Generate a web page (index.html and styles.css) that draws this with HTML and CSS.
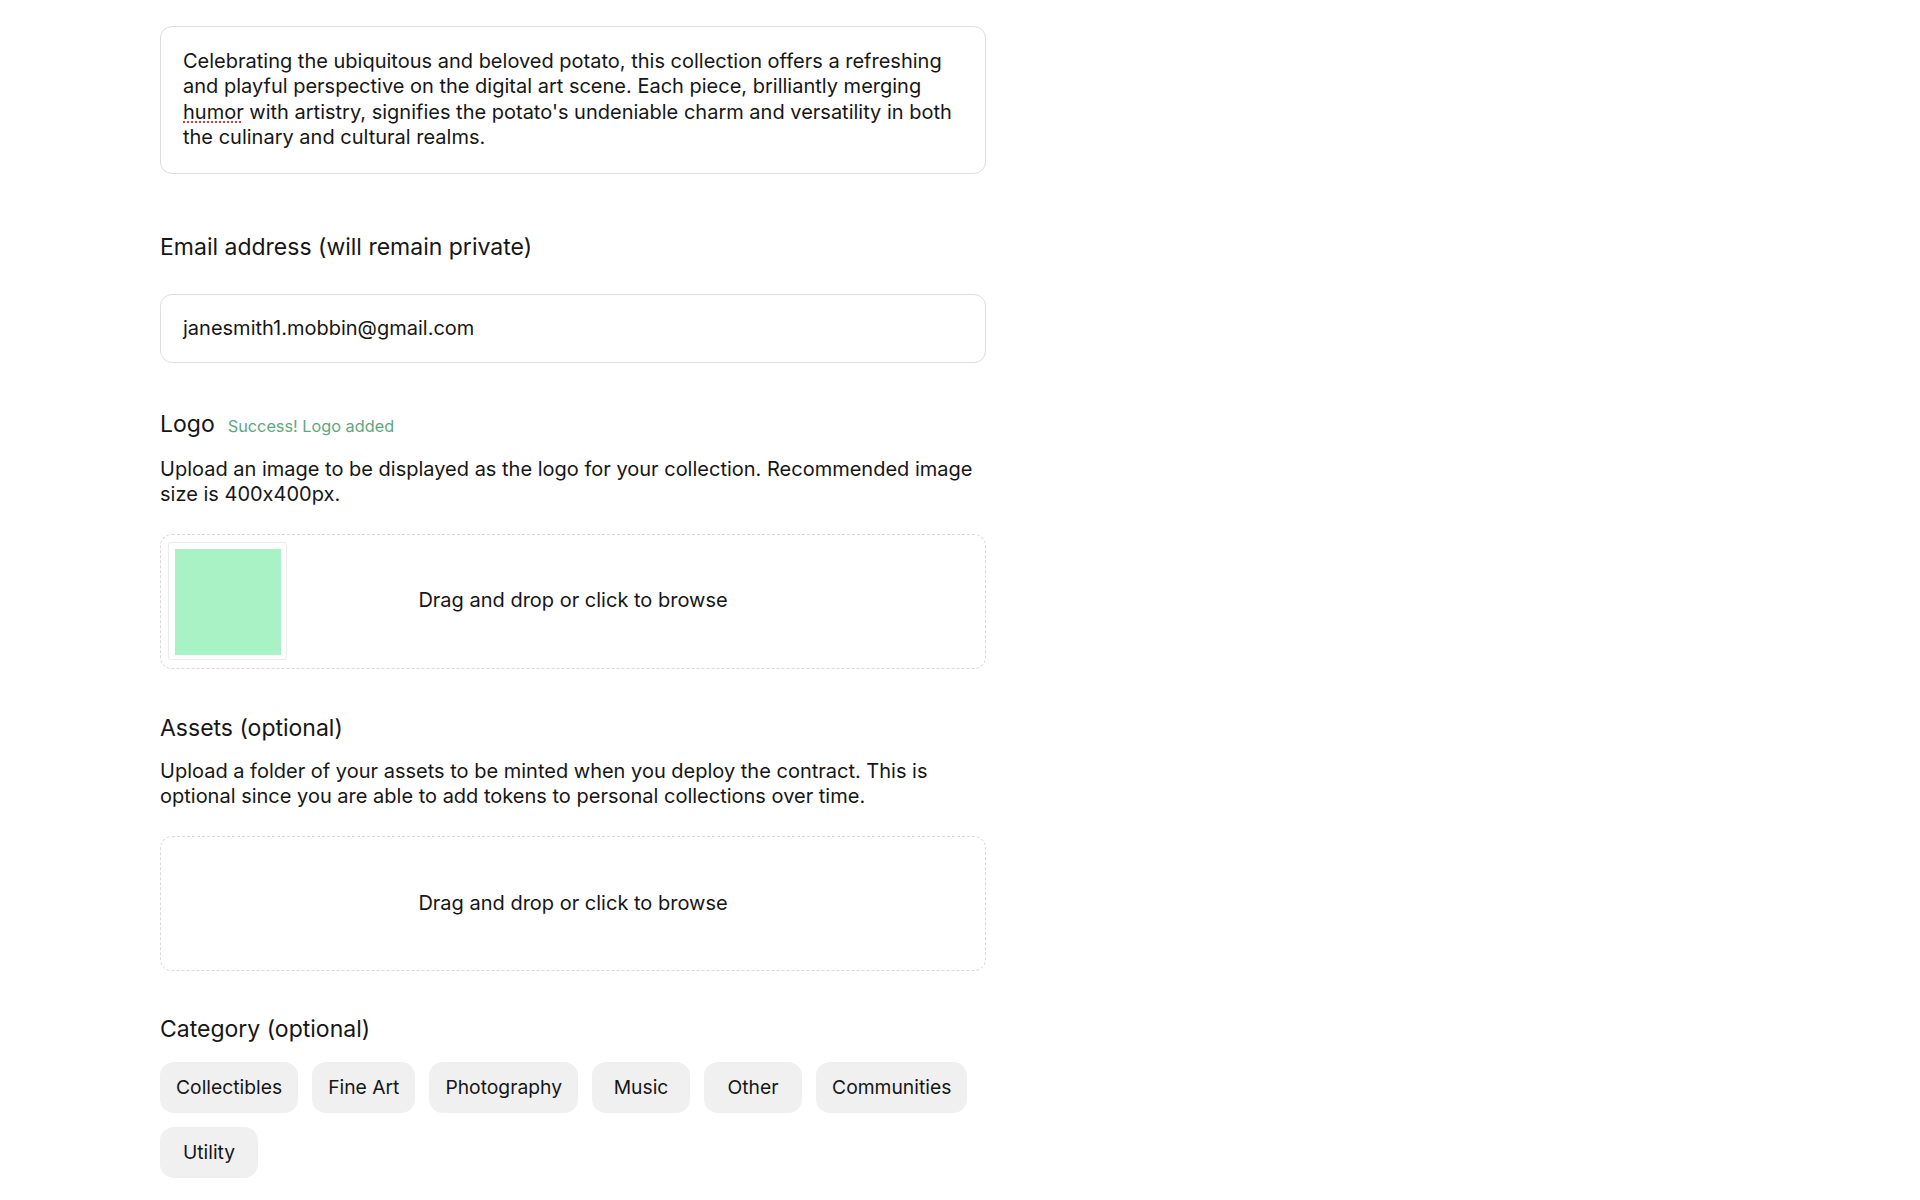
FILE: index.html
```html
<!DOCTYPE html>
<html lang="en">
<head>
<meta charset="utf-8">
<title>Create collection</title>
<link rel="stylesheet" href="styles.css">
</head>
<body>
<main class="form">
  <div class="textarea">Celebrating the ubiquitous and beloved potato, this collection offers a refreshing and playful perspective on the digital art scene. Each piece, brilliantly merging <span class="spell">humor</span> with artistry, signifies the potato's undeniable charm and versatility in both the culinary and cultural realms.</div>

  <section class="field field-email">
    <div class="label">Email address (will remain private)</div>
    <div class="input">janesmith1.mobbin@gmail.com</div>
  </section>

  <section class="field field-logo">
    <div class="label">Logo <span class="success">Success! Logo added</span></div>
    <p class="help">Upload an image to be displayed as the logo for your collection. Recommended image size is 400x400px.</p>
    <div class="dropzone">
      <div class="thumb"><div class="thumb-img"></div></div>
      <span class="drop-text">Drag and drop or click to browse</span>
    </div>
  </section>

  <section class="field field-assets">
    <div class="label">Assets (optional)</div>
    <p class="help">Upload a folder of your assets to be minted when you deploy the contract. This is optional since you are able to add tokens to personal collections over time.</p>
    <div class="dropzone">
      <span class="drop-text">Drag and drop or click to browse</span>
    </div>
  </section>

  <section class="field field-category">
    <div class="label">Category (optional)</div>
    <div class="chips">
      <span class="chip">Collectibles</span>
      <span class="chip">Fine Art</span>
      <span class="chip">Photography</span>
      <span class="chip">Music</span>
      <span class="chip">Other</span>
      <span class="chip">Communities</span>
      <span class="chip">Utility</span>
    </div>
  </section>
</main>
</body>
</html>
```

FILE: styles.css
```css
* { box-sizing: border-box; }
html, body {
  margin: 0;
  padding: 0;
  background: #ffffff;
}
body {
  font-family: Inter, "Noto Sans", "Liberation Sans", sans-serif;
  font-feature-settings: "calt" 0;
  color: #161616;
  font-size: 20px;
  line-height: 1.265;
}
.form {
  width: 826px;
  margin-left: 160px;
  padding-top: 26px;
  display: flex;
  flex-direction: column;
}
.textarea {
  border: 1px solid #dedede;
  border-radius: 12px;
  padding: 22px 22px;
  height: 148px;
  font-size: 20px;
  line-height: 25.3px;
}
.spell {
  text-decoration: underline dotted #d33;
  text-underline-offset: 3px;
}
.field { display: flex; flex-direction: column; }
.label {
  font-size: 23px;
  line-height: 28px;
  display: flex;
  align-items: baseline;
  gap: 13px;
}
.success {
  color: #5fa77e;
  font-size: 16.3px;
}
.help {
  margin: 0;
  font-size: 20px;
  line-height: 25.3px;
}
.field-email { margin-top: 59px; }
.field-email .input {
  margin-top: 33px;
  height: 69px;
  border: 1px solid #dedede;
  border-radius: 12px;
  padding: 0 22px;
  display: flex;
  align-items: center;
  font-size: 20px;
}
.field-logo { margin-top: 47px; }
.field-logo .help { margin-top: 17px; }
.dropzone {
  margin-top: 26px;
  height: 135px;
  border: 1px dashed #d9d9d9;
  border-radius: 12px;
  position: relative;
  display: flex;
  align-items: center;
  justify-content: center;
  font-size: 20px;
}
.thumb {
  position: absolute;
  left: 7px;
  top: 7px;
  width: 119px;
  height: 118px;
  border: 1px solid #ececec;
  border-radius: 3px;
  padding: 6px;
  background: #fff;
}
.thumb-img {
  width: 106px;
  height: 106px;
  background: #a9f2c5;
}
.field-assets { margin-top: 45px; }
.field-assets .help { margin-top: 17px; }
.field-assets .dropzone { margin-top: 27px; }
.field-category { margin-top: 44px; }
.chips {
  margin-top: 19px;
  display: flex;
  flex-wrap: wrap;
  gap: 14px;
}
.chip {
  height: 51px;
  min-width: 98px;
  padding: 0 16px;
  border-radius: 14px;
  background: #f0f0f0;
  display: inline-flex;
  align-items: center;
  justify-content: center;
  font-size: 19.3px;
}
```
